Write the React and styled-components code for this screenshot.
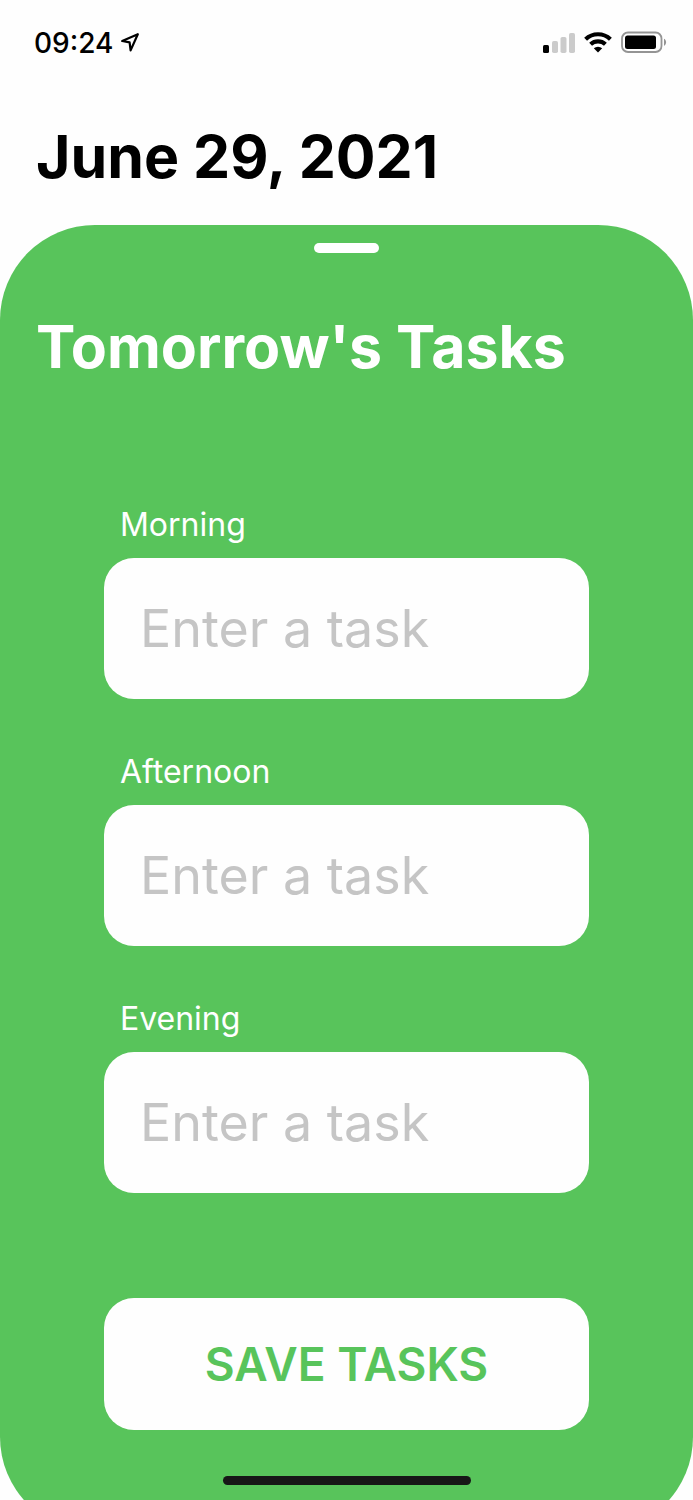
import React from "react";
import styled, { createGlobalStyle } from "styled-components";

const GlobalStyle = createGlobalStyle`
  *, *::before, *::after { box-sizing: border-box; }
  body {
    margin: 0;
    background: #fefefe;
    color: #000;
    font-family: Inter, "Liberation Sans", sans-serif;
  }
`;

const Screen = styled.div`
  display: flex;
  flex-direction: column;
  min-height: 100vh;
  overflow: hidden;
`;

const StatusBar = styled.header`
  display: flex;
  align-items: center;
  justify-content: space-between;
  height: 84px;
  padding: 0 26px 0 34px;
`;

const StatusGroup = styled.div`
  display: flex;
  align-items: center;
  gap: 8px;
`;

const Clock = styled.time`
  padding-top: 2px;
  font-size: 28px;
  line-height: 36px;
  font-weight: 500;
`;

const Heading = styled.h1`
  margin: 0;
  padding: 0 36px;
  font-size: 59px;
  line-height: 72px;
  font-weight: 700;
`;

const DateHeading = styled(Heading)`
  margin: 37px 0 32px;
`;

const Panel = styled.main`
  display: flex;
  flex: 1;
  flex-direction: column;
  align-items: center;
  margin-bottom: -32px;
  padding: 18px 0 46px;
  border-radius: 95px;
  background: #58c45b;
  color: #fff;
`;

const Grabber = styled.div`
  width: 65px;
  height: 10px;
  border-radius: 5px;
  background: #fff;
`;

const PanelHeading = styled(Heading).attrs({ as: "h2" })`
  align-self: stretch;
  margin: 58px 0 121px;
`;

const Form = styled.form`
  display: flex;
  flex-direction: column;
  width: 70%;
`;

const Field = styled.div`
  display: flex;
  flex-direction: column;
  gap: 12px;
  margin-bottom: 52px;
`;

const Label = styled.label`
  padding-left: 16px;
  font-size: 32px;
  line-height: 42px;
  font-weight: 400;
`;

const TextInput = styled.input`
  width: 100%;
  height: 141px;
  padding: 0 36px;
  border: 0;
  border-radius: 30px;
  outline: none;
  background: #fefefe;
  color: #000;
  font: 400 52px/66px Inter, "Liberation Sans", sans-serif;

  &::placeholder {
    color: #c5c5c5;
    opacity: 1;
  }
`;

const SaveButton = styled.button`
  height: 132px;
  margin-top: 53px;
  border: 0;
  border-radius: 30px;
  background: #fefefe;
  color: #58c45b;
  font: 600 46px/58px Inter, "Liberation Sans", sans-serif;
  cursor: pointer;
`;

const HomeIndicator = styled.div`
  width: 248px;
  height: 9px;
  margin-top: 46px;
  border-radius: 5px;
  background: #171717;
`;

const LocationIcon = () => (
  <svg width="19" height="20" viewBox="0 0 19 20" aria-hidden="true">
    <path
      d="M16.8 2.2 1.2 9 8.6 10.4 9.6 18.4Z"
      fill="none"
      stroke="#000"
      strokeWidth="2.2"
      strokeLinejoin="round"
    />
  </svg>
);

const SignalIcon = () => (
  <svg width="33" height="21" viewBox="0 0 33 21" aria-hidden="true">
    <rect x="0" y="13" width="6" height="8" rx="1.5" fill="#000" />
    <rect x="9" y="9" width="6" height="12" rx="1.8" fill="#cbcbcb" />
    <rect x="17.5" y="5" width="6" height="16" rx="1.8" fill="#cbcbcb" />
    <rect x="26" y="1" width="6" height="20" rx="1.8" fill="#cbcbcb" />
  </svg>
);

const WifiIcon = () => (
  <svg width="29" height="21" viewBox="0 0 29 21" aria-hidden="true">
    <g fill="none" stroke="#000" strokeWidth="4.2">
      <path d="M1.6 7.2A18 18 0 0 1 26.4 7.2" />
      <path d="M6.6 12.2A11 11 0 0 1 21.4 12.2" />
    </g>
    <path d="M9.8 16.2A6.4 6.4 0 0 1 18.2 16.2L14 20.6Z" fill="#000" />
  </svg>
);

const BatteryIcon = () => (
  <svg width="46" height="22" viewBox="0 0 46 22" aria-hidden="true">
    <rect x="1" y="1.5" width="39.5" height="19.5" rx="6" fill="none" stroke="#949494" strokeWidth="1.8" />
    <rect x="4" y="4.5" width="31" height="13.5" rx="2.5" fill="#000" />
    <path d="M43 7.8C45.8 9 45.8 13.6 43 14.8Z" fill="#949494" />
  </svg>
);

const PERIODS = ["Morning", "Afternoon", "Evening"];

export default function App() {
  return (
    <>
      <GlobalStyle />
      <Screen>
        <StatusBar>
          <StatusGroup>
            <Clock>09:24</Clock>
            <LocationIcon />
          </StatusGroup>
          <StatusGroup>
            <SignalIcon />
            <WifiIcon />
            <BatteryIcon />
          </StatusGroup>
        </StatusBar>
        <DateHeading>June 29, 2021</DateHeading>
        <Panel>
          <Grabber />
          <PanelHeading>Tomorrow's Tasks</PanelHeading>
          <Form onSubmit={(event) => event.preventDefault()}>
            {PERIODS.map((period) => (
              <Field key={period}>
                <Label htmlFor={period.toLowerCase()}>{period}</Label>
                <TextInput id={period.toLowerCase()} type="text" placeholder="Enter a task" />
              </Field>
            ))}
            <SaveButton type="submit">SAVE TASKS</SaveButton>
          </Form>
          <HomeIndicator />
        </Panel>
      </Screen>
    </>
  );
}
